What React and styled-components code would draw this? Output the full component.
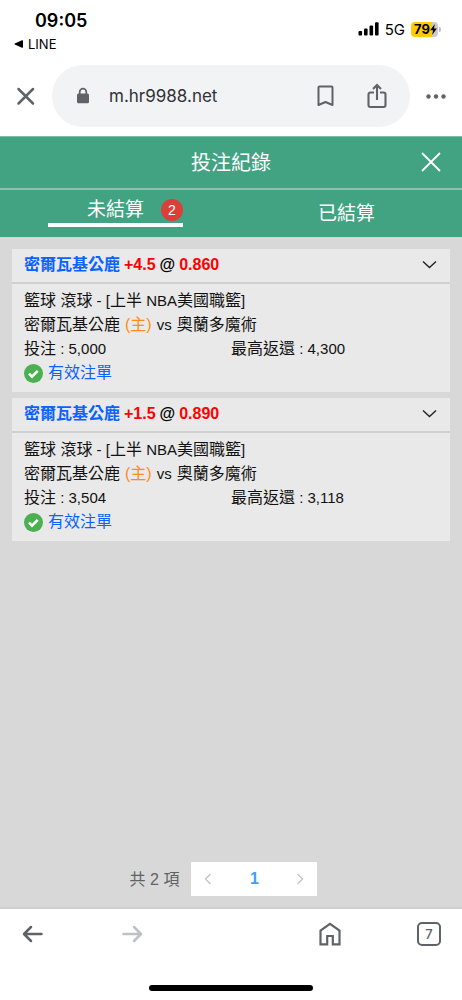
import React, { useState } from 'react';
import styled, { createGlobalStyle } from 'styled-components';

const GlobalStyle = createGlobalStyle`
    * {
        box-sizing: border-box;
    }

    body {
        margin: 0;
        background-color: #fff;
        font-family: 'Liberation Sans', 'Noto Sans CJK TC', sans-serif;
        color: #111;
    }

    button {
        padding: 0;
        border: none;
        background: none;
        color: inherit;
        font: inherit;
        cursor: pointer;
    }

    svg {
        display: block;
    }
`;

const Screen = styled.div`
    display: flex;
    flex-direction: column;
    min-height: 100vh;
`;

// Phone status bar
const StatusBar = styled.div`
    display: flex;
    justify-content: space-between;
    height: 65px;
    padding: 9px 24px 0 14px;
    font-family: Inter, sans-serif;
    color: #000;
`;

const Clock = styled.div`
    padding-left: 21px;
    font-size: 18px;
    line-height: 24px;
    font-weight: 600;
`;

const BackToApp = styled.a`
    display: flex;
    align-items: center;
    gap: 5px;
    font-size: 13px;
    line-height: 22px;
    color: #000;
    text-decoration: none;
`;

const StatusIcons = styled.div`
    display: flex;
    align-items: center;
    height: 20px;
    margin-top: 10px;
    gap: 6px;
    font-size: 15px;
`;

const Battery = styled.div`
    position: relative;
    width: 27px;
    height: 15px;
    padding-left: 3px;
    border-radius: 4px;
    background: linear-gradient(90deg, #fecb0a 79%, #ccc 79%);
    display: flex;
    align-items: center;
    font-size: 13px;
    font-weight: 700;

    &::after {
        content: '';
        position: absolute;
        right: -3px;
        top: 5px;
        width: 2px;
        height: 5px;
        border-radius: 0 2px 2px 0;
        background-color: #bbb;
    }
`;

// Browser chrome
const AddressRow = styled.div`
    display: flex;
    align-items: center;
    height: 71px;
    padding: 0 16px;
    padding-bottom: 9px;
    color: #5f6368;
`;

const AddressPill = styled.div`
    flex: 1;
    min-width: 0;
    display: flex;
    align-items: center;
    height: 62px;
    margin: 0 16px;
    padding: 0 22px 0 24px;
    border-radius: 31px;
    background-color: #f1f3f5;

    svg {
        flex-shrink: 0;
    }
`;

const AddressInput = styled.input`
    flex: 1;
    min-width: 0;
    margin-left: 19px;
    padding: 0;
    border: none;
    outline: none;
    background: none;
    font-family: Inter, sans-serif;
    font-size: 17px;
    color: #303134;
`;

const PillActions = styled.div`
    display: flex;
    align-items: center;
    gap: 30px;
`;

// Bet record page
const PageHeader = styled.header`
    display: grid;
    grid-template-columns: 62px 1fr 62px;
    align-items: center;
    height: 54px;
    border-top: 1px solid #7fbda6;
    border-bottom: 2px solid #8fbfae;
    background-color: #41a382;
    color: #fff;
`;

const PageTitle = styled.h1`
    grid-column: 2;
    margin: 0;
    text-align: center;
    font-size: 20px;
    line-height: 30px;
    font-weight: 400;
`;

const CloseButton = styled.button`
    justify-self: center;
    padding-bottom: 2px;
`;

const Tabs = styled.div`
    display: grid;
    grid-template-columns: 1fr 1fr;
    justify-items: center;
    align-items: center;
    height: 47px;
    background-color: #41a382;
    color: #fff;
`;

const Tab = styled.button`
    display: grid;
    grid-template-columns: 1fr auto 1fr;
    align-items: center;
    width: 135px;
    height: ${({ $active }) => ($active ? '37px' : '40px')};
    padding-top: ${({ $active }) => ($active ? '6px' : '0')};
    align-self: ${({ $active }) => ($active ? 'start' : 'center')};
    border-bottom: ${({ $active }) => ($active ? '4px solid #fff' : 'none')};
    font-size: 19px;
    line-height: 27px;
`;

const TabLabel = styled.span`
    grid-column: 2;
`;

const Badge = styled.span`
    justify-self: end;
    width: 22px;
    height: 22px;
    border-radius: 50%;
    background-color: #dc3f3a;
    font-size: 14px;
    line-height: 22px;
    text-align: center;
`;

const Content = styled.main`
    flex: 1;
    display: flex;
    flex-direction: column;
    gap: 6px;
    padding: 12px 12px 11px;
    background-color: #d8d8d8;
`;

const BetCard = styled.article`
    background-color: #e9e9e9;
`;

const BetHeader = styled.button`
    display: flex;
    align-items: center;
    gap: 4px;
    width: 100%;
    height: 35px;
    padding: 0 12px 2px;
    border-bottom: 2px solid #d0d0d0;
    font-size: 16px;
    line-height: 24px;
    font-weight: 700;
    color: #000;
`;

const Pick = styled.span`
    color: #0a62ff;
`;

const Price = styled.span`
    color: #ff0000;
`;

const Figure = styled.span`
    font-size: 15px;
`;

const Chevron = styled.svg`
    margin-left: auto;
`;

const BetBody = styled.div`
    padding: 5px 12px 7px;
    font-size: 16px;
    line-height: 24px;
`;

const Teams = styled.div`
    display: flex;
    gap: 5px;
`;

const Home = styled.span`
    color: #ff8c1a;
`;

const Amounts = styled.div`
    display: grid;
    grid-template-columns: 1fr 1fr;
`;

const BetStatus = styled.div`
    display: flex;
    align-items: center;
    gap: 5px;
    color: #0a62ff;
`;

const Pagination = styled.nav`
    display: flex;
    justify-content: center;
    align-items: center;
    gap: 12px;
    margin-top: auto;
    padding-right: 15px;
    font-size: 16px;
    color: #606266;
`;

const Total = styled.span`
    padding-bottom: 3px;
`;

const Pager = styled.div`
    display: grid;
    grid-template-columns: 34px 1fr 34px;
    width: 126px;
    height: 34px;
    background-color: #fff;
`;

const PagerButton = styled.button`
    display: flex;
    align-items: center;
    justify-content: center;
    font-size: 16px;
    font-weight: 700;
    color: ${({ $current }) => ($current ? '#409eff' : '#c0c4cc')};
`;

const Toolbar = styled.nav`
    display: flex;
    align-items: center;
    justify-content: space-between;
    height: 56px;
    padding: 0 21px 4px;
    border-top: 2px solid #cfcfcf;
    color: #5f6368;
`;

const ToolbarGroup = styled.div`
    display: flex;
    align-items: center;
    gap: 75px;
`;

const ToolbarButton = styled.button`
    color: ${({ disabled }) => (disabled ? '#bdc1c6' : 'inherit')};
`;

const TabCount = styled.button`
    && {
        width: 24px;
        height: 24px;
        border: 2px solid #5f6368;
        border-radius: 5px;
        font-family: Inter, sans-serif;
        font-size: 13px;
        line-height: 20px;
        font-weight: 500;
    }
`;

const HomeIndicator = styled.div`
    width: 164px;
    height: 6px;
    margin: 22px auto 9px;
    border-radius: 3px;
    background-color: #000;
`;

const bets = [
    { id: 1, pick: '密爾瓦基公鹿', line: '+4.5', odds: '0.860', home: '密爾瓦基公鹿', away: '奧蘭多魔術', stake: '5,000', payout: '4,300' },
    { id: 2, pick: '密爾瓦基公鹿', line: '+1.5', odds: '0.890', home: '密爾瓦基公鹿', away: '奧蘭多魔術', stake: '3,504', payout: '3,118' },
];

const Bet = ({ bet }) => {
    const [open, setOpen] = useState(true);

    return (
        <BetCard>
            <BetHeader aria-expanded={open} onClick={() => setOpen(!open)}>
                <Pick>{bet.pick}</Pick>
                <Price>{bet.line}</Price>
                <span>@</span>
                <Price>{bet.odds}</Price>
                <Chevron width="17" height="10" viewBox="0 0 17 10" fill="none" stroke="#222" strokeWidth="1.4">
                    <path d="M2 1.5l6.5 6 6.5-6" />
                </Chevron>
            </BetHeader>
            {open && (
                <BetBody>
                    <div>籃球 滾球<Figure> - [</Figure>上半<Figure> NBA</Figure>美國職籃<Figure>]</Figure></div>
                    <Teams>
                        <span>{bet.home}</span>
                        <Home>(主)</Home>
                        <Figure>vs</Figure>
                        <span>{bet.away}</span>
                    </Teams>
                    <Amounts>
                        <span>投注<Figure> : {bet.stake}</Figure></span>
                        <span>最高返還<Figure> : {bet.payout}</Figure></span>
                    </Amounts>
                    <BetStatus>
                        <svg width="19" height="19" viewBox="0 0 19 19">
                            <circle cx="9.5" cy="9.5" r="9.5" fill="#4caf50" />
                            <path d="M5 9.6l3 3 5.7-5.7" fill="none" stroke="#fff" strokeWidth="2.6" />
                        </svg>
                        有效注單
                    </BetStatus>
                </BetBody>
            )}
        </BetCard>
    );
};

const App = () => {
    const [tab, setTab] = useState('open');

    return (
        <Screen>
            <GlobalStyle />
            <StatusBar>
                <div>
                    <Clock>09:05</Clock>
                    <BackToApp href="#line">
                        <svg width="9" height="8" viewBox="0 0 9 8" fill="#000">
                            <path d="M8 0.3Q9 0 9 1V7Q9 8 8 7.7L0.8 4.6Q0 4 0.8 3.4Z" />
                        </svg>
                        LINE
                    </BackToApp>
                </div>
                <StatusIcons>
                    <svg width="21" height="14" viewBox="0 0 21 14" fill="#000">
                        <rect x="0.5" y="9" width="3.6" height="4.5" rx="1" />
                        <rect x="6" y="6.5" width="3.6" height="7" rx="1" />
                        <rect x="11.5" y="3.5" width="3.6" height="10" rx="1" />
                        <rect x="17" y="0.3" width="3.6" height="13.2" rx="1" />
                    </svg>
                    <span>5G</span>
                    <Battery>
                        79
                        <svg width="7" height="11" viewBox="0 0 7 11" fill="#000">
                            <path d="M4.8 0L0.2 6.2H3L2.2 11L6.8 4.6H4Z" />
                        </svg>
                    </Battery>
                </StatusIcons>
            </StatusBar>

            <AddressRow>
                <button aria-label="Close page">
                    <svg width="20" height="20" viewBox="0 0 20 20" fill="none" stroke="currentColor" strokeWidth="2.5" strokeLinecap="round">
                        <path d="M2.5 3l14.5 14.5M17 3L2.5 17.5" />
                    </svg>
                </button>
                <AddressPill>
                    <svg width="14" height="18" viewBox="0 0 14 18">
                        <path d="M3.7 8V5a3.3 3.3 0 0 1 6.6 0v3" fill="none" stroke="#5f6368" strokeWidth="1.7" />
                        <rect x="1" y="6.5" width="12" height="9.7" rx="1.5" fill="#5f6368" />
                    </svg>
                    <AddressInput aria-label="Address" defaultValue="m.hr9988.net" />
                    <PillActions>
                        <button aria-label="Bookmark">
                            <svg width="20" height="24" viewBox="0 0 20 24" fill="none" stroke="currentColor" strokeWidth="2">
                                <path d="M2.5 21V3.5a1 1 0 0 1 1-1h12a1 1 0 0 1 1 1V21l-7-3z" strokeLinejoin="round" />
                            </svg>
                        </button>
                        <button aria-label="Share">
                            <svg width="22" height="26" viewBox="0 0 22 26" fill="none" stroke="currentColor" strokeWidth="2.1">
                                <path d="M8 9.5H4.500a2 2 0 0 0-2 2V22a2 2 0 0 0 2 2h13a2 2 0 0 0 2-2V11.500a2 2 0 0 0-2-2H14M11 17V2.500M7 6l4-4 4 4" />
                            </svg>
                        </button>
                    </PillActions>
                </AddressPill>
                <button aria-label="More">
                    <svg width="20" height="5" viewBox="0 0 20 5" fill="currentColor">
                        <circle cx="2.5" cy="2.5" r="2.2" />
                        <circle cx="10" cy="2.5" r="2.2" />
                        <circle cx="17.5" cy="2.5" r="2.2" />
                    </svg>
                </button>
            </AddressRow>

            <PageHeader>
                <PageTitle>投注紀錄</PageTitle>
                <CloseButton aria-label="關閉">
                    <svg width="20" height="20" viewBox="0 0 20 20" fill="none" stroke="#fff" strokeWidth="1.8">
                        <path d="M1 1l18 18M19 1L1 19" />
                    </svg>
                </CloseButton>
            </PageHeader>
            <Tabs>
                <Tab $active={tab === 'open'} onClick={() => setTab('open')}>
                    <TabLabel>未結算</TabLabel>
                    <Badge>2</Badge>
                </Tab>
                <Tab $active={tab === 'settled'} onClick={() => setTab('settled')}>
                    <TabLabel>已結算</TabLabel>
                </Tab>
            </Tabs>

            <Content>
                {tab === 'open' && bets.map((bet) => <Bet key={bet.id} bet={bet} />)}
                <Pagination>
                    <Total>共 2 項</Total>
                    <Pager>
                        <PagerButton aria-label="上一頁" disabled>
                            <svg width="8" height="12" viewBox="0 0 8 12" fill="none" stroke="currentColor" strokeWidth="1.4">
                                <path d="M6.5 1L1.5 6l5 5" />
                            </svg>
                        </PagerButton>
                        <PagerButton $current>1</PagerButton>
                        <PagerButton aria-label="下一頁" disabled>
                            <svg width="8" height="12" viewBox="0 0 8 12" fill="none" stroke="currentColor" strokeWidth="1.4">
                                <path d="M1.5 1l5 5-5 5" />
                            </svg>
                        </PagerButton>
                    </Pager>
                </Pagination>
            </Content>

            <Toolbar>
                <ToolbarGroup>
                    <ToolbarButton aria-label="Back">
                        <svg width="24" height="20" viewBox="0 0 24 20" fill="none" stroke="currentColor" strokeWidth="2.5" strokeLinecap="round" strokeLinejoin="round">
                            <path d="M20.5 10H3.5M10 3L3 10l7 7" />
                        </svg>
                    </ToolbarButton>
                    <ToolbarButton aria-label="Forward" disabled>
                        <svg width="24" height="20" viewBox="0 0 24 20" fill="none" stroke="currentColor" strokeWidth="2.5" strokeLinecap="round" strokeLinejoin="round">
                            <path d="M3.5 10h17M14 3l7 7-7 7" />
                        </svg>
                    </ToolbarButton>
                </ToolbarGroup>
                <ToolbarGroup>
                    <ToolbarButton aria-label="Home">
                        <svg width="24" height="24" viewBox="0 0 24 24" fill="none" stroke="currentColor" strokeWidth="2.2">
                            <path d="M2.500 22.300V8.500L12 1.800l9.500 6.700v13.800h-6.700V14H9.200v8.300z" />
                        </svg>
                    </ToolbarButton>
                    <TabCount aria-label="Open tabs">7</TabCount>
                </ToolbarGroup>
            </Toolbar>
            <HomeIndicator />
        </Screen>
    );
};

export default App;
